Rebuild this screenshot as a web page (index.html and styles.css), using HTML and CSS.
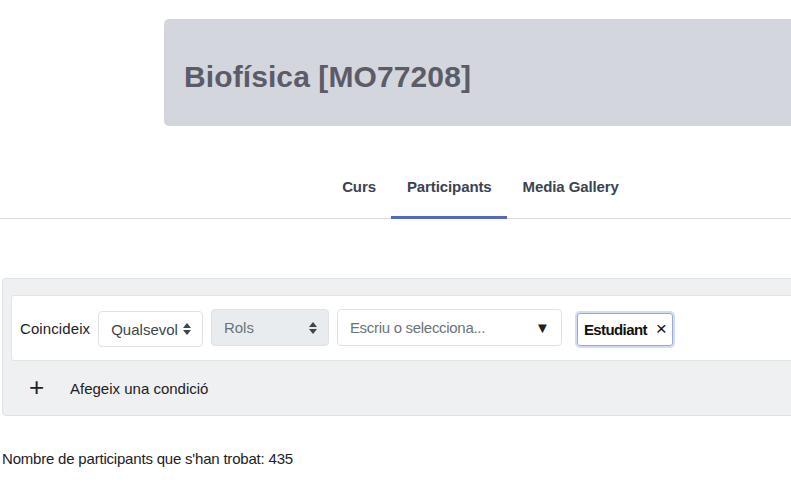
FILE: index.html
```html
<!DOCTYPE html>
<html lang="ca">
<head>
  <meta charset="UTF-8">
  <title>Participants</title>
  <link rel="stylesheet" href="styles.css">
</head>
<body>

  <div class="page-header">
    <div class="header-card">
      <h1>Biofísica [MO77208]</h1>
    </div>
  </div>

  <nav class="course-nav">
    <ul>
      <li><a href="#">Curs</a></li>
      <li class="active"><a href="#">Participants</a></li>
      <li><a href="#">Media Gallery</a></li>
    </ul>
  </nav>

  <div class="filters">
    <div class="filter-row">
      <span class="match-label">Coincideix</span>
      <div class="select">Qualsevol <span class="updown"></span></div>
      <div class="select disabled">Rols <span class="updown"></span></div>
      <div class="search">
        <span class="placeholder">Escriu o selecciona...</span>
        <span class="caret">&#9660;</span>
      </div>
      <div class="chip">Estudiant <span class="remove">&#215;</span></div>
    </div>
    <div class="add-row">
      <span class="plus">+</span>
      <span>Afegeix una condició</span>
    </div>
  </div>

  <p class="count">Nombre de participants que s'han trobat: 435</p>

</body>
</html>
```

FILE: styles.css
```css
body {
  margin: 0;
  background: #fff;
  color: #1d2125;
  font-family: "Liberation Sans", Arial, sans-serif;
  font-size: 15px;
  overflow: hidden;
}

.page-header {
  padding: 19px 0 0 164px;
}

.header-card {
  background: #d4d6dd;
  border-radius: 5px 0 0 5px;
  height: 107px;
  display: flex;
  align-items: center;
  padding: 0 20px;
}

.header-card h1 {
  margin: 8px 0 0 0;
  font-size: 30px;
  font-weight: bold;
  color: #5c5b69;
  letter-spacing: 0.1px;
}

/* tabs */
.course-nav {
  margin-top: 31px;
  border-bottom: 1px solid #dadada;
}

.course-nav ul {
  list-style: none;
  margin: 0;
  padding: 0 0 0 170px;
  display: flex;
  justify-content: center;
}

.course-nav li {
  border-bottom: 3px solid transparent;
  margin-bottom: -1px;
}

.course-nav li.active {
  border-bottom-color: #5069c4;
}

.course-nav a {
  display: block;
  padding: 20px 15.5px 19px;
  line-height: 20px;
  font-weight: bold;
  font-size: 15px;
  color: #3b4350;
  text-decoration: none;
  letter-spacing: -0.1px;
}

/* filter box */
.filters {
  margin: 59px 0 0 2px;
  width: 900px;
  background: #eff0f2;
  border: 1px solid #dee1e5;
  border-radius: 4px;
  padding: 16px 8px 0 8px;
  height: 120px;
}

.filter-row {
  background: #fff;
  border: 1px solid #e0e3e7;
  border-radius: 3px;
  height: 64px;
  display: flex;
  align-items: center;
  padding: 0 8px;
}

.match-label {
  margin-right: 8px;
  letter-spacing: 0.1px;
}

.select {
  height: 34px;
  border: 1px solid #dee2e6;
  border-radius: 4px;
  display: flex;
  align-items: center;
  padding: 0 15px 0 12px;
  color: #3e454c;
  margin-right: 8px;
  margin-top: 2px;
  box-sizing: content-box;
}

.select .updown {
  margin-left: 9px;
}

.select.disabled {
  background: #e9ecef;
  color: #6a737b;
  width: 89px;
  justify-content: space-between;
  margin-top: -1px;
  height: 35px;
}

.updown {
  display: inline-block;
  width: 0;
  height: 12px;
  position: relative;
}

.updown::before, .updown::after {
  content: "";
  position: absolute;
  left: -4px;
  border-left: 4px solid transparent;
  border-right: 4px solid transparent;
}

.updown::before {
  top: 0;
  border-bottom: 5px solid #3e454c;
}

.updown::after {
  bottom: 0;
  border-top: 5px solid #3e454c;
}

.search {
  width: 200px;
  height: 35px;
  margin-top: -1px;
  border: 1px solid #dee2e6;
  border-radius: 4px;
  display: flex;
  align-items: center;
  justify-content: space-between;
  padding: 0 11px 0 12px;
  margin-right: 15px;
}

.placeholder {
  color: #6a737b;
  letter-spacing: -0.3px;
}

.caret {
  font-size: 15px;
  color: #1d2125;
}

.chip {
  height: 31px;
  margin-top: 2px;
  border: 1px solid #9aa8d8;
  box-shadow: 0 0 0 2px #d3daf3;
  border-radius: 3px;
  display: flex;
  align-items: center;
  padding: 0 6px 0 6px;
  font-weight: bold;
  color: #111;
  letter-spacing: -0.6px;
}

.remove {
  margin-left: 9px;
  font-size: 19px;
  font-weight: normal;
}

.add-row {
  height: 53px;
  display: flex;
  align-items: center;
  padding-left: 18px;
  margin-top: 1px;
}

.plus {
  font-size: 26px;
  width: 41px;
  margin-top: -3px;
}

.count {
  margin: 34px 0 0 2px;
  letter-spacing: -0.2px;
}
```
